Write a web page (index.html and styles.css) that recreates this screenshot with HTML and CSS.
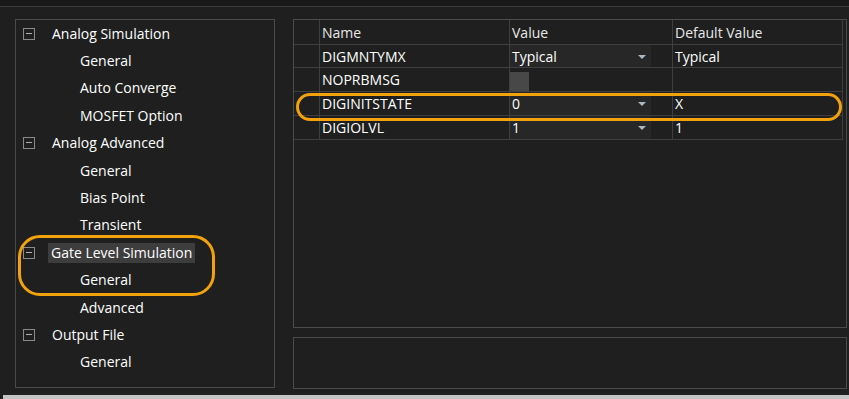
FILE: index.html
```html
<!DOCTYPE html>
<html lang="en">
<head>
    <meta charset="UTF-8">
    <title>Simulation Options</title>
    <link rel="stylesheet" href="styles.css">
</head>
<body>
    <div class="window">
        <div class="top-strip"></div>

        <div class="main">
            <!-- left: option tree -->
            <section class="tree-panel">
                <div class="tree-row parent"><span class="expander"></span><span class="label">Analog Simulation</span></div>
                <div class="tree-row child"><span class="label">General</span></div>
                <div class="tree-row child"><span class="label">Auto Converge</span></div>
                <div class="tree-row child"><span class="label">MOSFET Option</span></div>
                <div class="tree-row parent"><span class="expander"></span><span class="label">Analog Advanced</span></div>
                <div class="tree-row child"><span class="label">General</span></div>
                <div class="tree-row child"><span class="label">Bias Point</span></div>
                <div class="tree-row child"><span class="label">Transient</span></div>
                <div class="tree-row parent"><span class="expander"></span><span class="label selected">Gate Level Simulation</span></div>
                <div class="tree-row child"><span class="label">General</span></div>
                <div class="tree-row child"><span class="label">Advanced</span></div>
                <div class="tree-row parent"><span class="expander"></span><span class="label">Output File</span></div>
                <div class="tree-row child"><span class="label">General</span></div>

                <div class="mark tree-mark"></div>
            </section>

            <!-- right: property grid -->
            <div class="right-col">
                <section class="grid-panel">
                    <div class="prop-grid">
                        <div class="cell corner"></div>
                        <div class="cell head">Name</div>
                        <div class="cell head">Value</div>
                        <div class="cell head">Default Value</div>

                        <div class="cell corner"></div>
                        <div class="cell">DIGMNTYMX</div>
                        <div class="cell combo">Typical<span class="arrow"></span></div>
                        <div class="cell">Typical</div>

                        <div class="cell corner"></div>
                        <div class="cell">NOPRBMSG</div>
                        <div class="cell"><span class="check"></span></div>
                        <div class="cell"></div>

                        <div class="cell corner"></div>
                        <div class="cell">DIGINITSTATE</div>
                        <div class="cell combo">0<span class="arrow"></span></div>
                        <div class="cell">X</div>

                        <div class="cell corner"></div>
                        <div class="cell">DIGIOLVL</div>
                        <div class="cell combo">1<span class="arrow"></span></div>
                        <div class="cell">1</div>
                    </div>

                    <div class="mark grid-mark"></div>
                </section>

                <section class="info-panel"></section>
            </div>
        </div>

        <div class="bottom-strip"></div>
    </div>
</body>
</html>
```

FILE: styles.css
```css
:root {
    --bg: #1e1f1e;
    --bg-dark: #181918;
    --line: #4a4b4a;
    --grid-line: #3e3f3e;
    --text: #ffffff;
    --mark: #f2a20c;
}

body {
    margin: 0;
    background: var(--bg);
    color: var(--text);
    font-family: 'Open Sans', 'Noto Sans', sans-serif;
    font-size: 14px;
    font-weight: 500;
}

.window {
    width: 849px;
    height: 399px;
    display: flex;
    flex-direction: column;
    overflow: hidden;
}

.top-strip {
    height: 6px;
    background: var(--bg-dark);
    border-bottom: 1px solid #3a3b3a;
}

.main {
    flex: 1;
    display: flex;
    padding: 12px 2px 0 15px;
}

.bottom-strip {
    height: 4px;
    margin-left: 3px;
    background: #c4c4c4;
}

/* 左侧树 */
.tree-panel {
    position: relative;
    width: 258px;
    height: 367px;
    border: 1px solid var(--line);
}

.tree-row {
    height: 27.4px;
    display: flex;
    align-items: center;
}

.tree-row.parent {
    padding-left: 7px;
}

.tree-row.child {
    padding-left: 64px;
}

.expander {
    position: relative;
    width: 10px;
    height: 10px;
    border: 1px solid #8a8a8a;
    margin-right: 17px;
}

.expander::after {
    content: '';
    position: absolute;
    left: 2px;
    right: 2px;
    top: 4px;
    height: 1px;
    background: #b0b0b0;
}

.label {
    line-height: 20px;
}

.label.selected {
    background: #3d3d3d;
    margin-left: -4px;
    padding: 0 3px;
}

/* 右侧 */
.right-col {
    display: flex;
    flex-direction: column;
    margin-left: 18px;
    width: 554px;
}

.grid-panel {
    position: relative;
    height: 307px;
    border: 1px solid var(--line);
}

.prop-grid {
    display: grid;
    grid-template-columns: 26px 190px 163px 170px;
    grid-template-rows: 25px 23px 24px 24px 24px;
}

.cell {
    position: relative;
    display: flex;
    align-items: center;
    padding-left: 2px;
    border-right: 1px solid var(--grid-line);
    border-bottom: 1px solid var(--grid-line);
    white-space: nowrap;
}

.cell.head {
    color: #e8e8e8;
}

.cell.combo {
    background: linear-gradient(to right, #262726 0, #262726 141px, transparent 141px);
}

.arrow {
    position: absolute;
    left: 128px;
    top: 10px;
    border-left: 4px solid transparent;
    border-right: 4px solid transparent;
    border-top: 4px solid #aab8c4;
}

.check {
    width: 19px;
    height: 19px;
    margin-top: 3px;
    margin-left: -2px;
    background: #474847;
}

.info-panel {
    margin-top: 9px;
    height: 50px;
    border: 1px solid var(--line);
}

/* 标记圈 */
.mark {
    position: absolute;
    border: 3px solid var(--mark);
    pointer-events: none;
}

.tree-mark {
    left: 2px;
    top: 215px;
    width: 191px;
    height: 55px;
    border-radius: 22px;
}

.grid-mark {
    left: 2px;
    top: 73px;
    width: 540px;
    height: 22px;
    border-radius: 14px;
}
```
